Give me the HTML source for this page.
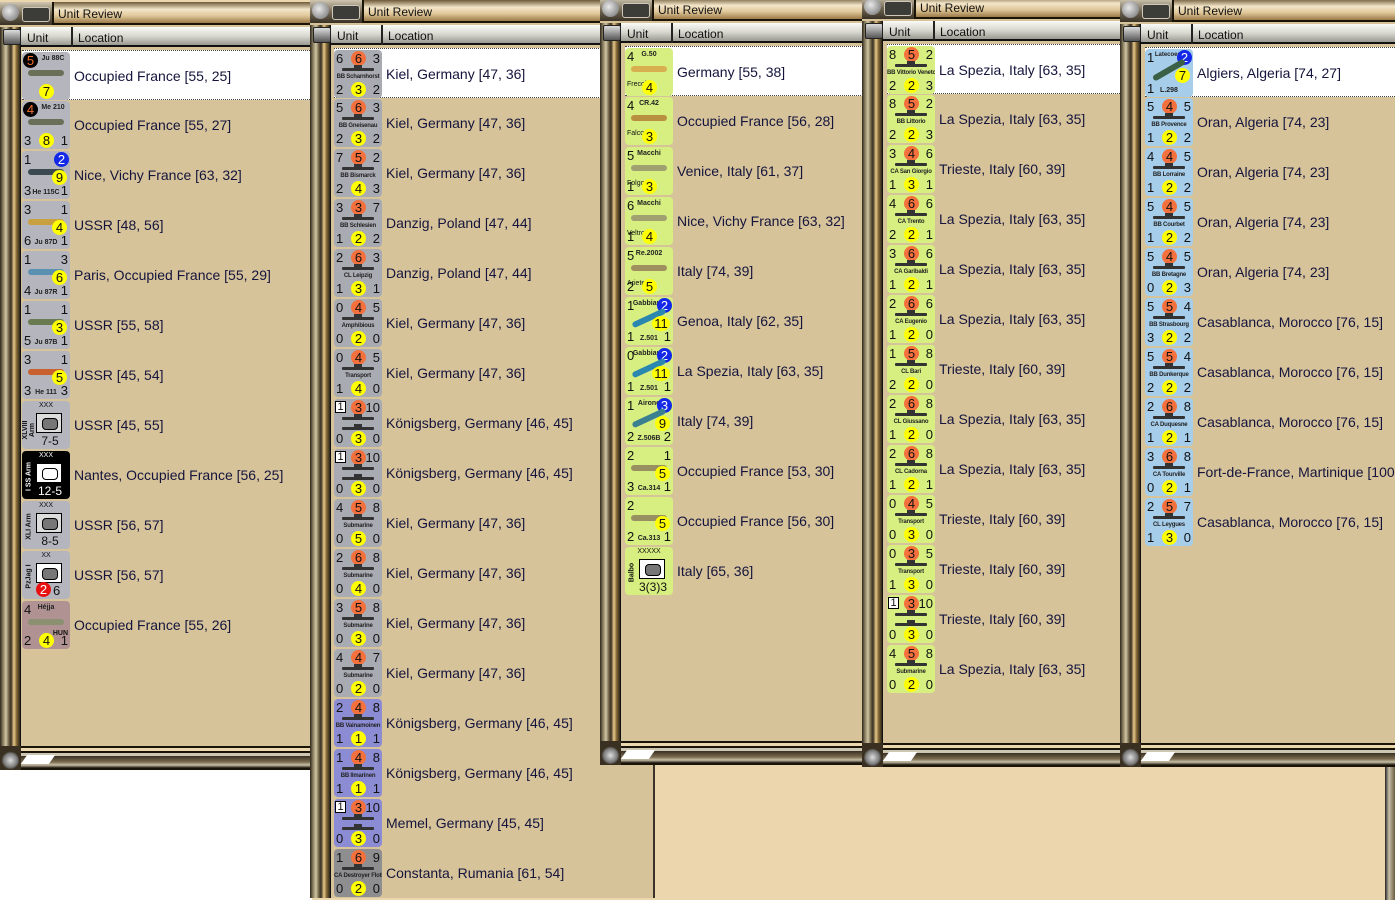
<!DOCTYPE html>
<html><head><meta charset="utf-8"><style>
*{margin:0;padding:0;box-sizing:border-box}
body{width:1395px;height:900px;overflow:hidden;position:relative;background:#ebd6ad;font-family:"Liberation Sans",sans-serif}
.wh{position:absolute;left:0;top:770px;width:312px;height:130px;background:#fff}
.w{position:absolute;background:#d6c39a;overflow:hidden;border-right:2px solid #3a3226}
.tb{position:absolute;left:0;top:0;right:0;height:23px;background:linear-gradient(#6e5a38,#f3e6c9 35%,#e0c89a 65%,#9c7a48);border-bottom:2px solid #1a1408}
.tb span{position:absolute;left:58px;top:5px;font-size:12px;color:#111}
.btn{position:absolute;left:0;top:0;width:54px;height:23px;background:linear-gradient(#cfc6b0,#6e6450 55%,#3a3226);border-right:2px solid #1a1408}
.btn:before{content:"";position:absolute;left:2px;top:2px;width:17px;height:17px;border-radius:50%;background:radial-gradient(circle at 40% 40%,#e8e8e8,#6a6a6a)}
.btn:after{content:"";position:absolute;left:22px;top:5px;width:26px;height:13px;background:#3c3c38;border:1px solid #cfc8b8;border-radius:3px}
.lf{position:absolute;left:0;top:25px;bottom:0;width:21px;background:linear-gradient(90deg,#2c261a,#8a7e60 15%,#cfc5a4 30%,#6a5c40 45%,#3a3022 55%,#e7c98a 70%,#8a6c3a 82%,#2c261a);border-right:1px solid #111}
.lf:before{content:"";position:absolute;left:3px;top:2px;width:16px;height:14px;background:linear-gradient(#ddd,#555);border:1px solid #222;border-radius:2px}
.hd{position:absolute;left:21px;top:25px;right:0;height:20px;background:linear-gradient(#fafaf6,#d8d8d0 50%,#9a9a92);border-bottom:2px solid #111;font-size:12px;color:#111}
.hd span{position:absolute;top:4px}
.hd i{position:absolute;left:50px;top:0;width:2px;height:20px;background:#222}
.ls{position:absolute;left:22px;top:49px;right:0}
.r{height:50px;position:relative}
.r.s{background:#fff;border-top:1px dotted #444;border-bottom:1px dotted #444;margin-top:-1px}
.r>span{position:absolute;left:52px;top:17px;font-size:14px;color:#14143c;white-space:nowrap}
.c{position:absolute;left:0;top:1px;width:48px;height:48px;border-radius:4px;font-size:13px;color:#111;overflow:hidden}
.g{background:#a9abb3}.pg{background:#b4b5bd}.p{background:#8c8cd4}.dg{background:#8e8e90}.y{background:#d6ef80}.b{background:#a6cdea}.hu{background:#b09292}.bk{background:#000;color:#fff}
.c i{position:absolute;font-style:normal;line-height:13px}
.tl{left:2px;top:2px}.tr{right:2px;top:2px}.bl{left:2px;bottom:2px}.br{right:2px;bottom:2px}
.oc,.yc,.bu,.ym,.kc{position:absolute;width:15px;height:15px;border-radius:50%;text-align:center;line-height:15px;font-size:13px}
.oc{left:17px;top:1px;background:#f4703c}
.yc{left:17px;bottom:1px;background:#ff0}
.ym{right:3px;top:19px;background:#ff0}
.bu{right:1px;top:1px;background:#1428e8;color:#fff}
.kc{left:1px;top:1px;background:#000;color:#f47030}
.nm{position:absolute;left:0;right:0;top:24px;text-align:center;font-size:6px;font-weight:bold;color:#222;white-space:nowrap;letter-spacing:-.2px}
.pn{position:absolute;left:0;right:0;top:3px;text-align:center;font-size:7px;font-weight:bold;color:#222;white-space:nowrap}
.sh{position:absolute;left:8px;top:18px;width:32px;height:3px;background:#333;border-radius:1px}
.sh:after{content:"";position:absolute;left:12px;top:-3px;width:8px;height:3px;background:#333}
.pl{position:absolute;left:6px;top:18px;width:36px;height:6px;border-radius:3px;background:#6a7058}
.bx{position:absolute;left:1px;top:2px;width:11px;height:12px;background:#fff;border:1px solid #000;font-size:11px;line-height:10px;text-align:center}
.arm{position:absolute;left:14px;top:12px;width:26px;height:20px;background:#ddd;border:1px solid #000}
.arm:after{content:"";position:absolute;left:5px;top:4px;width:14px;height:10px;border:1px solid #000;border-radius:4px;background:#777}
.bk .arm{background:#fff}.bk .arm:after{background:#fff}
.xx{position:absolute;left:0;right:0;top:1px;text-align:center;font-size:7px}
.st{position:absolute;left:0;right:0;bottom:1px;text-align:center;font-size:12px;padding-left:8px}
.vt{position:absolute;left:-8px;top:22px;transform:rotate(-90deg);font-size:7px;font-weight:bold;width:30px;text-align:center}
.bb{position:absolute;left:0;right:0;bottom:0;height:24px;background:linear-gradient(#1a1408 0,#1a1408 2px,#ead7ae 2px,#ead7ae 5px,#1a1408 5px,#1a1408 7px,#cdc6b2 7px,#cdc6b2 10px,#3a3022 10px,#7a6c50 16px,#c8c0a8 19px,#1a1408 22px)}
.bb:before{content:"";position:absolute;left:0;bottom:0;width:21px;height:24px;background:radial-gradient(circle at 50% 60%,#ddd 0,#777 7px,#3a3022 9px)}
.bb:after{content:"";position:absolute;left:24px;top:9px;width:28px;height:9px;background:#fff;transform:skewX(-35deg)}
</style></head><body>
<div class="wh"></div>
<div style="position:absolute;left:1385px;top:765px;width:10px;height:135px;background:linear-gradient(90deg,#222,#c8c0a8 40%,#6a5c40)"></div>

<!-- W1 -->
<div class="w" style="left:0;top:2px;width:312px;height:768px">
<div class="tb"><div class="btn"></div><span>Unit Review</span></div>
<div class="lf"></div>
<div class="hd"><span style="left:6px">Unit</span><i></i><span style="left:57px">Location</span></div>
<div class="ls">
<div class="r s"><div class="c pg"><div class="kc">5</div><div class="pn" style="left:14px">Ju 88C</div><div class="pl"></div><div class="yc">7</div></div><span>Occupied France [55, 25]</span></div>
<div class="r"><div class="c pg"><div class="kc">4</div><div class="pn" style="left:14px">Me 210</div><div class="pl"></div><i class="bl">3</i><div class="yc">8</div><i class="br">1</i></div><span>Occupied France [55, 27]</span></div>
<div class="r"><div class="c pg"><i class="tl">1</i><div class="bu">2</div><div class="pl" style="background:#3a4a50"></div><div class="ym">9</div><i class="bl">3</i><div class="pn" style="top:38px">He 115C</div><i class="br">1</i></div><span>Nice, Vichy France [63, 32]</span></div>
<div class="r"><div class="c pg"><i class="tl">3</i><i class="tr">1</i><div class="pl" style="background:#c8a040"></div><div class="ym">4</div><i class="bl">6</i><div class="pn" style="top:38px">Ju 87D</div><i class="br">1</i></div><span>USSR [48, 56]</span></div>
<div class="r"><div class="c pg"><i class="tl">1</i><i class="tr">3</i><div class="pl" style="background:#5a90b0"></div><div class="ym">6</div><i class="bl">4</i><div class="pn" style="top:38px">Ju 87R</div><i class="br">1</i></div><span>Paris, Occupied France [55, 29]</span></div>
<div class="r"><div class="c pg"><i class="tl">1</i><i class="tr">1</i><div class="pl" style="background:#6a7a50"></div><div class="ym">3</div><i class="bl">5</i><div class="pn" style="top:38px">Ju 87B</div><i class="br">1</i></div><span>USSR [55, 58]</span></div>
<div class="r"><div class="c pg"><i class="tl">3</i><i class="tr">1</i><div class="pl" style="background:#c86030"></div><div class="ym">5</div><i class="bl">3</i><div class="pn" style="top:38px">He 111</div><i class="br">3</i></div><span>USSR [45, 54]</span></div>
<div class="r"><div class="c pg"><div class="xx">XXX</div><div class="vt">XLVIII Arm</div><div class="arm"></div><div class="st">7-5</div></div><span>USSR [45, 55]</span></div>
<div class="r"><div class="c bk"><div class="xx">XXX</div><div class="vt">I SS Arm</div><div class="arm"></div><div class="st">12-5</div></div><span>Nantes, Occupied France [56, 25]</span></div>
<div class="r"><div class="c pg"><div class="xx">XXX</div><div class="vt">XLI Arm</div><div class="arm"></div><div class="st">8-5</div></div><span>USSR [56, 57]</span></div>
<div class="r"><div class="c pg"><div class="xx">XX</div><div class="vt">PzJag I</div><div class="arm" style="background:#fff"></div><div class="oc" style="left:14px;top:auto;bottom:2px;background:#e81010;color:#fff">2</div><i style="left:31px;bottom:2px">6</i></div><span>USSR [56, 57]</span></div>
<div class="r"><div class="c hu"><i class="tl">4</i><div class="pn">Héjja</div><div class="pl" style="background:#8a9070"></div><i style="right:2px;top:26px;font-size:7px;font-weight:bold">HUN</i><i class="bl">2</i><div class="yc">4</div><i class="br">1</i></div><span>Occupied France [55, 26]</span></div>
</div>
<div class="bb"></div>
</div>

<!-- W2 -->
<div class="w" style="left:310px;top:0;width:345px;height:898px">
<div class="tb"><div class="btn"></div><span>Unit Review</span></div>
<div class="lf"></div>
<div class="hd"><span style="left:6px">Unit</span><i></i><span style="left:57px">Location</span></div>
<div class="ls" style="left:24px">
<div class="r s"><div class="c g"><i class="tl">6</i><div class="oc">6</div><i class="tr">3</i><div class="sh"></div><div class="nm">BB Scharnhorst</div><i class="bl">2</i><div class="yc">3</div><i class="br">2</i></div><span>Kiel, Germany [47, 36]</span></div>
<div class="r"><div class="c g"><i class="tl">5</i><div class="oc">6</div><i class="tr">3</i><div class="sh"></div><div class="nm">BB Gneisenau</div><i class="bl">2</i><div class="yc">3</div><i class="br">2</i></div><span>Kiel, Germany [47, 36]</span></div>
<div class="r"><div class="c g"><i class="tl">7</i><div class="oc">5</div><i class="tr">2</i><div class="sh"></div><div class="nm">BB Bismarck</div><i class="bl">2</i><div class="yc">4</div><i class="br">3</i></div><span>Kiel, Germany [47, 36]</span></div>
<div class="r"><div class="c g"><i class="tl">3</i><div class="oc">3</div><i class="tr">7</i><div class="sh"></div><div class="nm">BB Schlesien</div><i class="bl">1</i><div class="yc">2</div><i class="br">2</i></div><span>Danzig, Poland [47, 44]</span></div>
<div class="r"><div class="c g"><i class="tl">2</i><div class="oc">6</div><i class="tr">3</i><div class="sh"></div><div class="nm">CL Leipzig</div><i class="bl">1</i><div class="yc">3</div><i class="br">1</i></div><span>Danzig, Poland [47, 44]</span></div>
<div class="r"><div class="c g"><i class="tl">0</i><div class="oc">4</div><i class="tr">5</i><div class="sh"></div><div class="nm">Amphibious</div><i class="bl">0</i><div class="yc">2</div><i class="br">0</i></div><span>Kiel, Germany [47, 36]</span></div>
<div class="r"><div class="c g"><i class="tl">0</i><div class="oc">4</div><i class="tr">5</i><div class="sh"></div><div class="nm">Transport</div><i class="bl">1</i><div class="yc">4</div><i class="br">0</i></div><span>Kiel, Germany [47, 36]</span></div>
<div class="r"><div class="c g"><div class="bx">1</div><div class="oc">3</div><i class="tr">10</i><div class="sh"></div><div class="sh" style="top:28px"></div><i class="bl">0</i><div class="yc">3</div><i class="br">0</i></div><span>Königsberg, Germany [46, 45]</span></div>
<div class="r"><div class="c g"><div class="bx">1</div><div class="oc">3</div><i class="tr">10</i><div class="sh"></div><div class="sh" style="top:28px"></div><i class="bl">0</i><div class="yc">3</div><i class="br">0</i></div><span>Königsberg, Germany [46, 45]</span></div>
<div class="r"><div class="c g"><i class="tl">4</i><div class="oc">5</div><i class="tr">8</i><div class="sh"></div><div class="nm">Submarine</div><i class="bl">0</i><div class="yc">5</div><i class="br">0</i></div><span>Kiel, Germany [47, 36]</span></div>
<div class="r"><div class="c g"><i class="tl">2</i><div class="oc">6</div><i class="tr">8</i><div class="sh"></div><div class="nm">Submarine</div><i class="bl">0</i><div class="yc">4</div><i class="br">0</i></div><span>Kiel, Germany [47, 36]</span></div>
<div class="r"><div class="c g"><i class="tl">3</i><div class="oc">5</div><i class="tr">8</i><div class="sh"></div><div class="nm">Submarine</div><i class="bl">0</i><div class="yc">3</div><i class="br">0</i></div><span>Kiel, Germany [47, 36]</span></div>
<div class="r"><div class="c g"><i class="tl">4</i><div class="oc">4</div><i class="tr">7</i><div class="sh"></div><div class="nm">Submarine</div><i class="bl">0</i><div class="yc">2</div><i class="br">0</i></div><span>Kiel, Germany [47, 36]</span></div>
<div class="r"><div class="c p"><i class="tl">2</i><div class="oc">4</div><i class="tr">8</i><div class="sh"></div><div class="nm">BB Vainamoinen</div><i class="bl">1</i><div class="yc">1</div><i class="br">1</i></div><span>Königsberg, Germany [46, 45]</span></div>
<div class="r"><div class="c p"><i class="tl">1</i><div class="oc">4</div><i class="tr">8</i><div class="sh"></div><div class="nm">BB Ilmarinen</div><i class="bl">1</i><div class="yc">1</div><i class="br">1</i></div><span>Königsberg, Germany [46, 45]</span></div>
<div class="r"><div class="c p"><div class="bx">1</div><div class="oc">3</div><i class="tr">10</i><div class="sh"></div><div class="sh" style="top:28px"></div><i class="bl">0</i><div class="yc">3</div><i class="br">0</i></div><span>Memel, Germany [45, 45]</span></div>
<div class="r"><div class="c dg"><i class="tl">1</i><div class="oc">6</div><i class="tr">9</i><div class="sh"></div><div class="nm">CA Destroyer Flotilla</div><i class="bl">0</i><div class="yc">2</div><i class="br">0</i></div><span>Constanta, Rumania [61, 54]</span></div>
</div>
</div>

<!-- W3 -->
<div class="w" style="left:600px;top:-2px;width:265px;height:767px">
<div class="tb"><div class="btn"></div><span>Unit Review</span></div>
<div class="lf"></div>
<div class="hd"><span style="left:6px">Unit</span><i></i><span style="left:57px">Location</span></div>
<div class="ls" style="left:25px">
<div class="r s"><div class="c y"><i class="tl">4</i><div class="pn">G.50</div><div class="pl" style="background:#d8b050"></div><i style="left:2px;top:30px;font-size:7px">Freccia</i><div class="yc">4</div></div><span>Germany [55, 38]</span></div>
<div class="r"><div class="c y"><i class="tl">4</i><div class="pn">CR.42</div><div class="pl" style="background:#b89040"></div><i style="left:2px;top:30px;font-size:7px">Falco</i><div class="yc">3</div></div><span>Occupied France [56, 28]</span></div>
<div class="r"><div class="c y"><i class="tl">5</i><div class="pn">Macchi</div><div class="pl" style="background:#a0a070"></div><i style="left:2px;top:30px;font-size:7px">Folgore</i><i class="bl">1</i><div class="yc">3</div></div><span>Venice, Italy [61, 37]</span></div>
<div class="r"><div class="c y"><i class="tl">6</i><div class="pn">Macchi</div><div class="pl" style="background:#a0a070"></div><i style="left:2px;top:30px;font-size:7px">Veltro</i><i class="bl">1</i><div class="yc">4</div></div><span>Nice, Vichy France [63, 32]</span></div>
<div class="r"><div class="c y"><i class="tl">5</i><div class="pn">Re.2002</div><div class="pl" style="background:#a09060"></div><i style="left:2px;top:30px;font-size:7px">Ariete</i><i class="bl">2</i><div class="yc">5</div></div><span>Italy [74, 39]</span></div>
<div class="r"><div class="c y"><i class="tl">1</i><div class="pn">Gabbiano</div><div class="bu">2</div><div class="pl" style="background:#2a88b0;transform:rotate(-25deg)"></div><div class="ym" style="width:18px">11</div><i class="bl">1</i><div class="pn" style="top:38px">Z.501</div><i class="br">1</i></div><span>Genoa, Italy [62, 35]</span></div>
<div class="r"><div class="c y"><i class="tl">0</i><div class="pn">Gabbiano</div><div class="bu">2</div><div class="pl" style="background:#2a88b0;transform:rotate(-25deg)"></div><div class="ym" style="width:18px">11</div><i class="bl">1</i><div class="pn" style="top:38px">Z.501</div><i class="br">1</i></div><span>La Spezia, Italy [63, 35]</span></div>
<div class="r"><div class="c y"><i class="tl">1</i><div class="pn">Airone</div><div class="bu">3</div><div class="pl" style="background:#3a8090;transform:rotate(-25deg)"></div><div class="ym">9</div><i class="bl">2</i><div class="pn" style="top:38px">Z.506B</div><i class="br">2</i></div><span>Italy [74, 39]</span></div>
<div class="r"><div class="c y"><i class="tl">2</i><i class="tr">1</i><div class="pl" style="background:#989060"></div><div class="ym">5</div><i class="bl">3</i><div class="pn" style="top:38px">Ca.314</div><i class="br">1</i></div><span>Occupied France [53, 30]</span></div>
<div class="r"><div class="c y"><i class="tl">2</i><div class="pl" style="background:#989060"></div><div class="ym">5</div><i class="bl">2</i><div class="pn" style="top:38px">Ca.313</div><i class="br">1</i></div><span>Occupied France [56, 30]</span></div>
<div class="r"><div class="c y"><div class="xx">XXXXX</div><div class="vt">Balbo</div><div class="arm" style="background:#fff"></div><div class="st">3(3)3</div></div><span>Italy [65, 36]</span></div>
</div>
<div class="bb"></div>
</div>

<!-- W4 -->
<div class="w" style="left:862px;top:-4px;width:262px;height:771px">
<div class="tb"><div class="btn"></div><span>Unit Review</span></div>
<div class="lf"></div>
<div class="hd"><span style="left:6px">Unit</span><i></i><span style="left:57px">Location</span></div>
<div class="ls" style="left:25px">
<div class="r s"><div class="c y"><i class="tl">8</i><div class="oc">5</div><i class="tr">2</i><div class="sh"></div><div class="nm">BB Vittorio Veneto</div><i class="bl">2</i><div class="yc">2</div><i class="br">3</i></div><span>La Spezia, Italy [63, 35]</span></div>
<div class="r"><div class="c y"><i class="tl">8</i><div class="oc">5</div><i class="tr">2</i><div class="sh"></div><div class="nm">BB Littorio</div><i class="bl">2</i><div class="yc">2</div><i class="br">3</i></div><span>La Spezia, Italy [63, 35]</span></div>
<div class="r"><div class="c y"><i class="tl">3</i><div class="oc">4</div><i class="tr">6</i><div class="sh"></div><div class="nm">CA San Giorgio</div><i class="bl">1</i><div class="yc">3</div><i class="br">1</i></div><span>Trieste, Italy [60, 39]</span></div>
<div class="r"><div class="c y"><i class="tl">4</i><div class="oc">6</div><i class="tr">6</i><div class="sh"></div><div class="nm">CA Trento</div><i class="bl">2</i><div class="yc">2</div><i class="br">1</i></div><span>La Spezia, Italy [63, 35]</span></div>
<div class="r"><div class="c y"><i class="tl">3</i><div class="oc">6</div><i class="tr">6</i><div class="sh"></div><div class="nm">CA Garibaldi</div><i class="bl">1</i><div class="yc">2</div><i class="br">1</i></div><span>La Spezia, Italy [63, 35]</span></div>
<div class="r"><div class="c y"><i class="tl">2</i><div class="oc">6</div><i class="tr">6</i><div class="sh"></div><div class="nm">CA Eugenio</div><i class="bl">1</i><div class="yc">2</div><i class="br">0</i></div><span>La Spezia, Italy [63, 35]</span></div>
<div class="r"><div class="c y"><i class="tl">1</i><div class="oc">5</div><i class="tr">8</i><div class="sh"></div><div class="nm">CL Bari</div><i class="bl">2</i><div class="yc">2</div><i class="br">0</i></div><span>Trieste, Italy [60, 39]</span></div>
<div class="r"><div class="c y"><i class="tl">2</i><div class="oc">6</div><i class="tr">8</i><div class="sh"></div><div class="nm">CL Giussano</div><i class="bl">1</i><div class="yc">2</div><i class="br">0</i></div><span>La Spezia, Italy [63, 35]</span></div>
<div class="r"><div class="c y"><i class="tl">2</i><div class="oc">6</div><i class="tr">8</i><div class="sh"></div><div class="nm">CL Cadorna</div><i class="bl">1</i><div class="yc">2</div><i class="br">1</i></div><span>La Spezia, Italy [63, 35]</span></div>
<div class="r"><div class="c y"><i class="tl">0</i><div class="oc">4</div><i class="tr">5</i><div class="sh"></div><div class="nm">Transport</div><i class="bl">0</i><div class="yc">3</div><i class="br">0</i></div><span>Trieste, Italy [60, 39]</span></div>
<div class="r"><div class="c y"><i class="tl">0</i><div class="oc">3</div><i class="tr">5</i><div class="sh"></div><div class="nm">Transport</div><i class="bl">1</i><div class="yc">3</div><i class="br">0</i></div><span>Trieste, Italy [60, 39]</span></div>
<div class="r"><div class="c y"><div class="bx">1</div><div class="oc">3</div><i class="tr">10</i><div class="sh"></div><div class="sh" style="top:28px"></div><i class="bl">0</i><div class="yc">3</div><i class="br">0</i></div><span>Trieste, Italy [60, 39]</span></div>
<div class="r"><div class="c y"><i class="tl">4</i><div class="oc">5</div><i class="tr">8</i><div class="sh"></div><div class="nm">Submarine</div><i class="bl">0</i><div class="yc">2</div><i class="br">0</i></div><span>La Spezia, Italy [63, 35]</span></div>
</div>
<div class="bb"></div>
</div>

<!-- W5 -->
<div class="w" style="left:1120px;top:-1px;width:285px;height:768px;border-right:none">
<div class="tb"><div class="btn"></div><span>Unit Review</span></div>
<div class="lf"></div>
<div class="hd"><span style="left:6px">Unit</span><i></i><span style="left:57px">Location</span></div>
<div class="ls" style="left:25px">
<div class="r s"><div class="c b"><i class="tl">1</i><div class="pn" style="font-size:6px">Latecoere</div><div class="bu">2</div><div class="pl" style="background:#3a6048;transform:rotate(-30deg)"></div><div class="ym">7</div><i class="bl">1</i><div class="pn" style="top:38px">L.298</div></div><span>Algiers, Algeria [74, 27]</span></div>
<div class="r"><div class="c b"><i class="tl">5</i><div class="oc">4</div><i class="tr">5</i><div class="sh"></div><div class="nm">BB Provence</div><i class="bl">1</i><div class="yc">2</div><i class="br">2</i></div><span>Oran, Algeria [74, 23]</span></div>
<div class="r"><div class="c b"><i class="tl">4</i><div class="oc">4</div><i class="tr">5</i><div class="sh"></div><div class="nm">BB Lorraine</div><i class="bl">1</i><div class="yc">2</div><i class="br">2</i></div><span>Oran, Algeria [74, 23]</span></div>
<div class="r"><div class="c b"><i class="tl">5</i><div class="oc">4</div><i class="tr">5</i><div class="sh"></div><div class="nm">BB Courbet</div><i class="bl">1</i><div class="yc">2</div><i class="br">2</i></div><span>Oran, Algeria [74, 23]</span></div>
<div class="r"><div class="c b"><i class="tl">5</i><div class="oc">4</div><i class="tr">5</i><div class="sh"></div><div class="nm">BB Bretagne</div><i class="bl">0</i><div class="yc">2</div><i class="br">3</i></div><span>Oran, Algeria [74, 23]</span></div>
<div class="r"><div class="c b"><i class="tl">5</i><div class="oc">5</div><i class="tr">4</i><div class="sh"></div><div class="nm">BB Strasbourg</div><i class="bl">3</i><div class="yc">2</div><i class="br">2</i></div><span>Casablanca, Morocco [76, 15]</span></div>
<div class="r"><div class="c b"><i class="tl">5</i><div class="oc">5</div><i class="tr">4</i><div class="sh"></div><div class="nm">BB Dunkerque</div><i class="bl">2</i><div class="yc">2</div><i class="br">2</i></div><span>Casablanca, Morocco [76, 15]</span></div>
<div class="r"><div class="c b"><i class="tl">2</i><div class="oc">6</div><i class="tr">8</i><div class="sh"></div><div class="nm">CA Duquesne</div><i class="bl">1</i><div class="yc">2</div><i class="br">1</i></div><span>Casablanca, Morocco [76, 15]</span></div>
<div class="r"><div class="c b"><i class="tl">3</i><div class="oc">6</div><i class="tr">8</i><div class="sh"></div><div class="nm">CA Tourville</div><i class="bl">0</i><div class="yc">2</div><i class="br">1</i></div><span>Fort-de-France, Martinique [100, 33]</span></div>
<div class="r"><div class="c b"><i class="tl">2</i><div class="oc">5</div><i class="tr">7</i><div class="sh"></div><div class="nm">CL Leygues</div><i class="bl">1</i><div class="yc">3</div><i class="br">0</i></div><span>Casablanca, Morocco [76, 15]</span></div>
</div>
<div class="bb"></div>
</div>
</body></html>
